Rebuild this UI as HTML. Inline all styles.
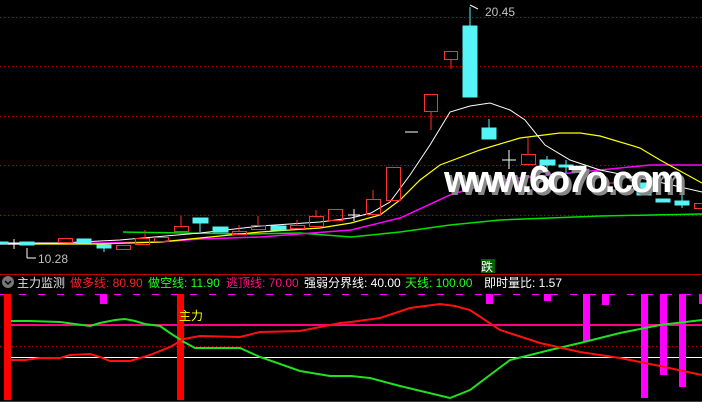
<!DOCTYPE html>
<html><head><meta charset="utf-8"><style>
body{margin:0;background:#000;width:702px;height:402px;overflow:hidden;font-family:"Liberation Sans","Noto Sans CJK SC",sans-serif}
.lg{position:absolute;top:276px;font-size:12px;white-space:pre;line-height:14px}
</style></head><body>
<svg width="702" height="402" style="position:absolute;left:0;top:0" xmlns="http://www.w3.org/2000/svg">
<g stroke="#c00000" stroke-dasharray="1,3" stroke-width="1">
<line x1="0" y1="17.5" x2="702" y2="17.5"/><line x1="0" y1="66.5" x2="702" y2="66.5"/><line x1="0" y1="116.5" x2="702" y2="116.5"/><line x1="0" y1="165.5" x2="702" y2="165.5"/><line x1="0" y1="215.5" x2="702" y2="215.5"/>
<line x1="0" y1="346.5" x2="702" y2="346.5"/>
</g>
<line x1="0" y1="274.5" x2="702" y2="274.5" stroke="#c00000"/>
<line x1="0" y1="401.5" x2="702" y2="401.5" stroke="#c00000"/>
<!-- MA lines -->
<polyline fill="none" stroke="#00e000" stroke-width="1.5" points="123,232 250,234 300,233 351,237 400,232 450,225 500,220 550,218 600,216 702,214"/>
<polyline fill="none" stroke="#ff00ff" stroke-width="1.5" points="0,244 100,243 160,242 200,239 260,237 351,230 400,218 450,195 500,180 550,175 600,170 650,165 702,165"/>
<polyline fill="none" stroke="#ffff00" stroke-width="1.2" points="0,244 100,244 160,242 200,238 260,232 320,228 351,223 380,215 400,200 420,180 440,165 480,150 520,138 560,133 580,133 600,136 640,148 660,160 702,183"/>
<polyline fill="none" stroke="#ffffff" stroke-width="1" points="0,243 60,243 120,240 200,233 260,226 320,222 351,218 371,213 390,202 410,175 430,145 450,112 470,106 490,103 510,110 525,120 545,145 570,160 600,170 650,180 702,192"/>
<!-- candles left -->
<g stroke="#ff3030" fill="none" stroke-width="1">
<rect x="58.5" y="238.5" width="14" height="4"/><rect x="116.5" y="245.5" width="14" height="4"/><rect x="135.5" y="238.5" width="14" height="6"/><line x1="145" y1="230" x2="145" y2="238"/>
<rect x="154.5" y="237.5" width="14" height="4"/><rect x="174.5" y="226.5" width="14" height="5"/><line x1="181" y1="216" x2="181" y2="226"/>
<rect x="232.5" y="231.5" width="14" height="3"/><line x1="239" y1="225" x2="239" y2="231"/>
<rect x="251.5" y="225.5" width="14" height="4"/><line x1="258" y1="216" x2="258" y2="225"/>
<rect x="290.5" y="225.5" width="14" height="3"/><line x1="297" y1="220" x2="297" y2="225"/>
<rect x="309.5" y="216.5" width="14" height="10"/><line x1="316" y1="210" x2="316" y2="216"/>
<rect x="328.5" y="209.5" width="14" height="11"/>
<rect x="366.5" y="199.5" width="14" height="15"/><line x1="373" y1="190" x2="373" y2="199"/>
<rect x="386.5" y="167.5" width="14" height="33"/>
<rect x="424.5" y="94.5" width="13" height="17"/><line x1="431" y1="111" x2="431" y2="130"/>
<rect x="444.5" y="51.5" width="13" height="8"/><line x1="451" y1="59" x2="451" y2="69"/>
<rect x="521.5" y="154.5" width="14" height="10"/><line x1="528" y1="138" x2="528" y2="154"/>
<rect x="694.5" y="203.5" width="8" height="5"/>
<line x1="604" y1="183" x2="622" y2="183"/>
</g>
<g fill="#55f5f5" stroke="#55f5f5">
<rect x="77" y="239" width="14" height="4"/><rect x="97" y="245" width="14" height="3"/><line x1="104" y1="248" x2="104" y2="252"/>
<rect x="193" y="218" width="15" height="5"/><line x1="200" y1="223" x2="200" y2="232"/>
<rect x="213" y="227" width="15" height="5"/><rect x="271" y="226" width="15" height="4"/>
<rect x="463" y="26" width="14" height="71"/><line x1="470" y1="7" x2="470" y2="26"/>
<rect x="482" y="128" width="14" height="11"/><line x1="489" y1="119" x2="489" y2="128"/>
<rect x="540" y="160" width="15" height="5"/><line x1="547" y1="156" x2="547" y2="174"/>
<rect x="559" y="165" width="14" height="2"/><line x1="566" y1="160" x2="566" y2="173"/>
<rect x="637" y="183" width="14" height="12"/>
<rect x="656" y="199" width="14" height="3"/><rect x="675" y="201" width="14" height="4"/><line x1="682" y1="195" x2="682" y2="208"/>
<rect x="0" y="242" width="8" height="2"/><rect x="20" y="242" width="14" height="3"/>
</g>
<g stroke="#fff">
<line x1="405" y1="132" x2="418" y2="132"/><line x1="502" y1="160" x2="516" y2="160"/><line x1="509" y1="150" x2="509" y2="169"/>
<line x1="348" y1="215" x2="360" y2="215"/><line x1="354" y1="209" x2="354" y2="221"/>
<line x1="8" y1="244" x2="20" y2="244"/><line x1="14" y1="239" x2="14" y2="249"/>
<line x1="27" y1="248" x2="27" y2="258"/><line x1="27" y1="258" x2="36" y2="258"/>
<line x1="470" y1="5" x2="478" y2="9"/>
</g>
<text x="38" y="263" fill="#c0c0c0" font-size="12" font-family="Liberation Sans">10.28</text>
<text x="485" y="16" fill="#c0c0c0" font-size="12" font-family="Liberation Sans">20.45</text>
<text x="447" y="195" fill="#888" font-size="38" font-weight="bold" font-family="Liberation Sans" textLength="240">www.6o7o.com</text>
<text x="444" y="192" fill="#fff" font-size="38" font-weight="bold" font-family="Liberation Sans" textLength="240">www.6o7o.com</text>
<rect x="481" y="259" width="14" height="14" fill="#006000"/>
<text x="481" y="271" fill="#fff" font-size="12" font-family="Noto Sans CJK SC">跌</text>
<!-- lower pane -->
<line x1="0" y1="294.5" x2="702" y2="294.5" stroke="#ff00ff" stroke-dasharray="7,12"/>
<line x1="11" y1="325" x2="702" y2="325" stroke="#ff0080" stroke-width="2"/>
<line x1="11" y1="357.5" x2="702" y2="357.5" stroke="#fff"/>
<rect x="4" y="294" width="7" height="106" fill="#f00"/><rect x="177" y="294" width="7" height="106" fill="#f00"/>
<g fill="#ff00ff"><rect x="100" y="294" width="7" height="10"/><rect x="486" y="294" width="7" height="10"/><rect x="544" y="294" width="7" height="7"/><rect x="583" y="294" width="7" height="47"/><rect x="602" y="294" width="7" height="11"/><rect x="641" y="294" width="7" height="104"/><rect x="660" y="294" width="7" height="81"/><rect x="679" y="294" width="7" height="93"/><rect x="699" y="294" width="4" height="10"/></g>
<polyline fill="none" stroke="#20e020" stroke-width="2" points="11,321 30,321 60,322 90,326 100,323 115,320 125,319 135,321 145,324 160,326 170,333 184,342 195,348 240,348 260,357 300,371 330,376 351,376 370,378 400,386 450,398 470,390 510,360 550,350 580,343 620,333 660,325 702,320"/>
<polyline fill="none" stroke="#ff1010" stroke-width="2" points="11,360 25,360 40,358 60,358 70,355 90,354 100,357 110,361 130,361 150,355 170,347 184,339 200,336 240,337 260,332 300,331 340,323 351,322 380,318 410,308 440,304 455,306 470,310 500,330 540,343 580,352 620,358 660,366 702,375"/>
<text x="179" y="320" fill="#ffff00" font-size="12" font-family="Noto Sans CJK SC">主力</text>
<circle cx="8" cy="282" r="6" fill="#777"/><path d="M5,281 L8,284 L11,281" stroke="#000" stroke-width="1.5" fill="none"/>
</svg>
<div class="lg" style="left:17px;color:#e0e0e0">主力监测</div>
<div class="lg" style="left:70px;color:#ff2020">做多线: 80.90</div>
<div class="lg" style="left:148px;color:#20ff20">做空线: 11.90</div>
<div class="lg" style="left:226px;color:#ff1080">逃顶线: 70.00</div>
<div class="lg" style="left:304px;color:#fff">强弱分界线: 40.00</div>
<div class="lg" style="left:405px;color:#20ff20">天线: 100.00</div>
<div class="lg" style="left:484px;color:#fff">即时量比: 1.57</div>
</body></html>
